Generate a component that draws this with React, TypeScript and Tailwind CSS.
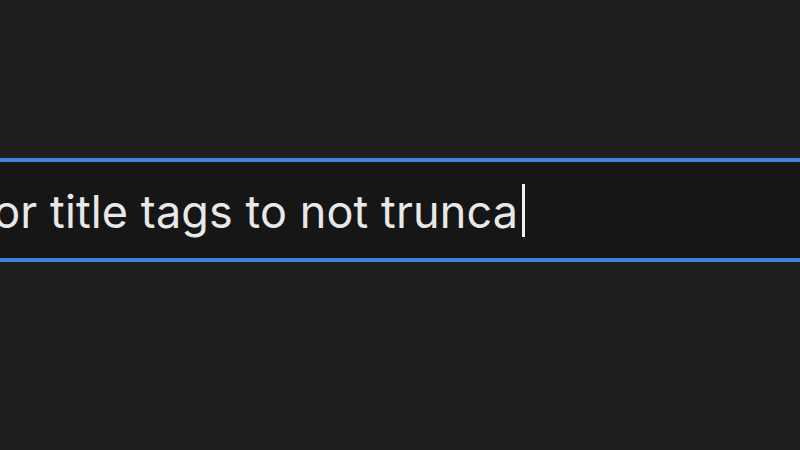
export default function App() {
  return (
    <div className="w-[800px] h-[450px] bg-[#1e1e1e] flex flex-col pt-[158px] overflow-hidden">
      <div className="h-[104px] shrink-0 border-y-4 border-[#3f82df] bg-[#161616] flex items-center justify-end pr-[275px] overflow-hidden whitespace-nowrap">
        <span className="shrink-0 text-[45px] leading-none tracking-[0.1px] text-[#e8e8e8] font-['Inter',sans-serif] mt-[2px]">
          Optimize for title tags to not trunca
        </span>
        <span className="shrink-0 w-[3px] h-[53px] bg-[#f2f2f2] ml-[4px]" />
      </div>
    </div>
  );
}
